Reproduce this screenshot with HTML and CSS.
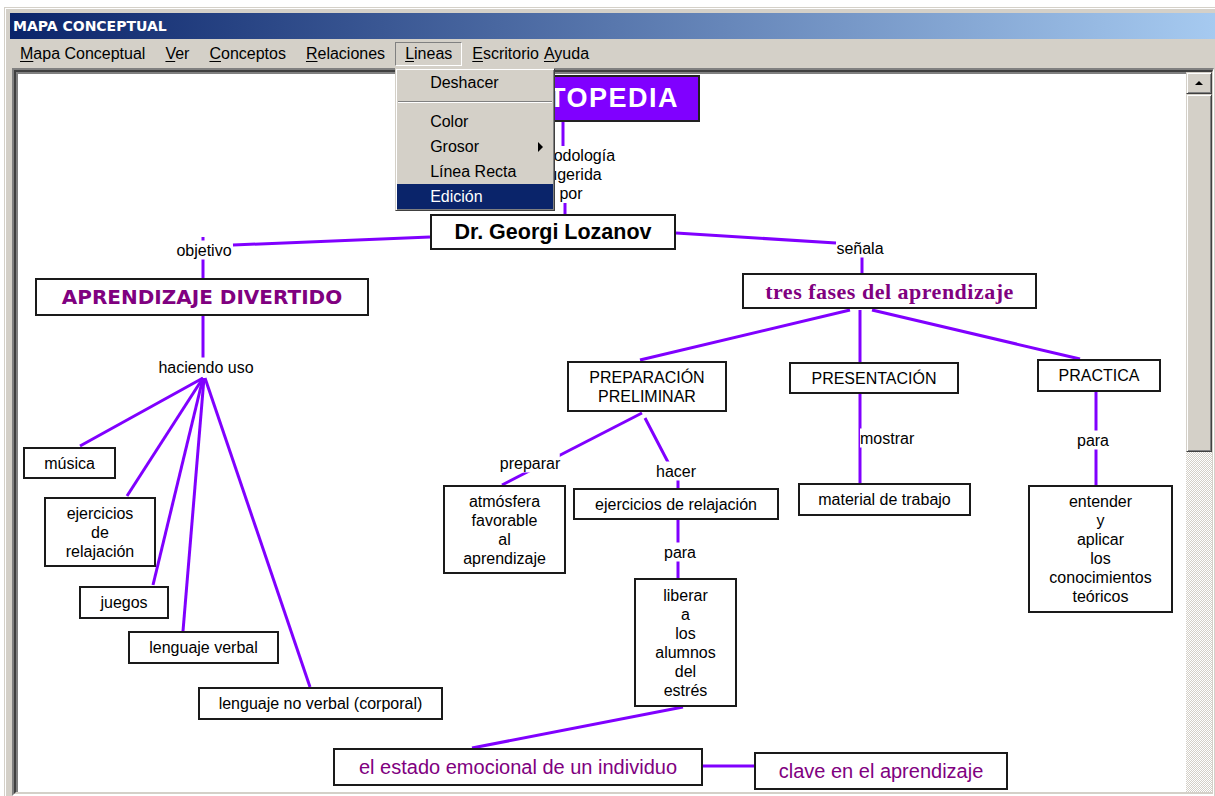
FILE: index.html
```html
<!DOCTYPE html>
<html lang="es">
<head>
<meta charset="utf-8">
<title>Mapa Conceptual</title>
<link rel="stylesheet" href="styles.css">
</head>
<body>
<div class="window">
  <div class="titlebar">MAPA CONCEPTUAL</div>
  <div class="menubar">
    <div class="menu-item"><u>M</u>apa Conceptual</div>
    <div class="menu-item"><u>V</u>er</div>
    <div class="menu-item"><u>C</u>onceptos</div>
    <div class="menu-item"><u>R</u>elaciones</div>
    <div class="menu-item open"><u>L</u>ineas
      <div class="dropdown">
        <div class="dd-item">Deshacer</div>
        <div class="dd-sep"><div class="dd-sep-line"></div></div>
        <div class="dd-item">Color</div>
        <div class="dd-item">Grosor<span class="dd-arrow"></span></div>
        <div class="dd-item">Línea Recta</div>
        <div class="dd-item active">Edición</div>
      </div>
    </div>
    <div class="menu-item tight-r"><u>E</u>scritorio</div>
    <div class="menu-item tight-l"><u>A</u>yuda</div>
  </div>
  <div class="frame">
    <div class="frame-inner">
      <div class="canvas">
        <svg class="links" width="1168" height="730" viewBox="0 0 1168 730">
          <g stroke="#8000ff" stroke-width="3" fill="none">
            <line x1="545" y1="48" x2="545" y2="72"/>
            <line x1="547" y1="126" x2="547" y2="140"/>
            <line x1="412" y1="163" x2="215" y2="171"/>
            <line x1="185" y1="163" x2="185" y2="204"/>
            <line x1="185" y1="242" x2="185" y2="286"/>
            <line x1="185" y1="304" x2="62" y2="372"/>
            <line x1="185" y1="304" x2="109" y2="422"/>
            <line x1="185" y1="304" x2="135" y2="511"/>
            <line x1="186" y1="304" x2="165" y2="557"/>
            <line x1="187" y1="304" x2="292" y2="613"/>
            <line x1="658" y1="159" x2="818" y2="169"/>
            <line x1="844" y1="183" x2="844" y2="199"/>
            <line x1="832" y1="236" x2="622" y2="286"/>
            <line x1="842" y1="236" x2="842" y2="288"/>
            <line x1="854" y1="236" x2="1062" y2="285"/>
            <line x1="842" y1="320" x2="842" y2="409"/>
            <line x1="1078" y1="318" x2="1078" y2="411"/>
            <line x1="624" y1="339" x2="484" y2="411"/>
            <polyline points="627,344 652,392 660,406 660,414"/>
            <line x1="660" y1="446" x2="660" y2="504"/>
            <line x1="665" y1="633" x2="454" y2="674"/>
            <line x1="685" y1="692" x2="736" y2="692"/>
          </g>
        </svg>

        <div class="node n-sug">SUGESTOPEDIA</div>
        <div class="label l-met">Metodología<br>sugerida<br>por</div>
        <div class="node n-dr">Dr. Georgi Lozanov</div>
        <div class="label lc l-obj">objetivo</div>
        <div class="label lc l-senala">señala</div>
        <div class="node n-apr">APRENDIZAJE DIVERTIDO</div>
        <div class="label lc l-haciendo">haciendo uso</div>
        <div class="node n-musica">música</div>
        <div class="node n-ejer1">ejercicios<br>de<br>relajación</div>
        <div class="node n-juegos">juegos</div>
        <div class="node n-lverbal">lenguaje verbal</div>
        <div class="node n-lnoverbal">lenguaje no verbal (corporal)</div>
        <div class="node n-tres">tres fases del aprendizaje</div>
        <div class="node n-prep">PREPARACIÓN<br>PRELIMINAR</div>
        <div class="node n-pres">PRESENTACIÓN</div>
        <div class="node n-prac">PRACTICA</div>
        <div class="label l-mostrar">mostrar</div>
        <div class="node n-material">material de trabajo</div>
        <div class="label lc l-para1">para</div>
        <div class="node n-entender">entender<br>y<br>aplicar<br>los<br>conocimientos<br>teóricos</div>
        <div class="label lc l-preparar">preparar</div>
        <div class="node n-atmos">atmósfera<br>favorable<br>al<br>aprendizaje</div>
        <div class="label lc l-hacer">hacer</div>
        <div class="node n-ejer2">ejercicios de relajación</div>
        <div class="label lc l-para2">para</div>
        <div class="node n-liberar">liberar<br>a<br>los<br>alumnos<br>del<br>estrés</div>
        <div class="node n-estado">el estado emocional de un individuo</div>
        <div class="node n-clave">clave en el aprendizaje</div>
      </div>
      <div class="scrollbar">
        <div class="sb-btn"><span class="sb-up"></span></div>
        <div class="sb-thumb"></div>
        <div class="sb-track"></div>
      </div>
    </div>
  </div>
</div>
</body>
</html>
```

FILE: styles.css
```css
* { box-sizing: border-box; }
html, body { margin: 0; padding: 0; }
body {
  background: #fff;
  width: 1215px;
  height: 796px;
  overflow: hidden;
  font-family: "Liberation Sans", Arial, sans-serif;
  font-size: 16px;
  color: #000;
}

.window {
  margin: 7px 0 0 4px;
  width: 1211px;
  height: 789px;
  background: #d4d0c8;
  border-top: 1px solid #d4d0c8;
  border-left: 1px solid #d4d0c8;
  box-shadow: inset 1px 1px 0 #fff;
  padding: 5px 0 0 5px;
  display: flex;
  flex-direction: column;
}

.titlebar {
  height: 26px;
  flex: none;
  background: linear-gradient(to right, #0a246a, #a6caf0);
  color: #fff;
  font-family: "DejaVu Sans", sans-serif;
  font-weight: bold;
  font-size: 14px;
  display: flex;
  align-items: center;
  padding-left: 3px;
}

.menubar {
  height: 29px;
  flex: none;
  display: flex;
  align-items: flex-start;
  padding-top: 3px;
}
.menu-item {
  position: relative;
  height: 24px;
  line-height: 22px;
  padding: 0 9px;
  border: 1px solid transparent;
  white-space: nowrap;
}
.menu-item u { text-underline-offset: 2px; }
.menu-item.open { border-color: #808080 #fff #fff #808080; }
.menu-item.tight-r { padding-right: 0; }
.menu-item.tight-l { padding-left: 3px; }

.dropdown {
  position: absolute;
  top: 25px;
  left: -1px;
  width: 160px;
  height: 143px;
  background: #d4d0c8;
  border: 1px solid;
  border-color: #d4d0c8 #404040 #404040 #d4d0c8;
  box-shadow: inset 1px 1px 0 #fff, inset -1px -1px 0 #808080;
  padding: 1px;
  z-index: 10;
}
.dd-item {
  position: relative;
  height: 25px;
  line-height: 25px;
  padding-left: 33px;
  white-space: nowrap;
}
.dd-item.active { background: #0a246a; color: #fff; }
.dd-sep { height: 14px; padding: 6px 1px 0; }
.dd-sep-line { border-top: 1px solid #808080; border-bottom: 1px solid #fff; }
.dd-arrow {
  position: absolute;
  right: 10px;
  top: 8px;
  width: 0;
  height: 0;
  border-left: 5px solid #000;
  border-top: 5px solid transparent;
  border-bottom: 5px solid transparent;
}

.frame {
  flex: 1;
  margin: 0 1px 0 2px;
  border: 2px solid;
  border-right-width: 1px;
  border-color: #808080 #fff #fff #808080;
  display: flex;
  min-height: 0;
}
.frame-inner {
  flex: 1;
  display: flex;
  border: 2px solid;
  border-right-width: 1px;
  border-color: #404040 #d4d0c8 #d4d0c8 #404040;
  min-height: 0;
}
.canvas {
  flex: 1;
  position: relative;
  background: #fff;
  border-top: 2px solid #808080;
  border-left: 2px solid #808080;
  overflow: hidden;
}
.links { position: absolute; left: 0; top: 0; z-index: 0; }

.node {
  position: absolute;
  z-index: 1;
  background: #fff;
  border: 2px solid #1a1a1a;
  display: flex;
  flex-direction: column;
  align-items: center;
  justify-content: center;
  text-align: center;
  font-size: 16px;
  line-height: 19px;
  white-space: nowrap;
}
.label {
  position: absolute;
  z-index: 1;
  background: #fff;
  font-size: 16px;
  line-height: 19px;
  white-space: nowrap;
  text-align: center;
}
.lc { transform: translate(-50%, -50%); }

.n-sug {
  left: 423px; top: 1px; width: 259px; height: 47px;
  background: #8000ff; color: #fff; border-color: #222;
  align-items: flex-end;
  padding-right: 19px;
  font-weight: bold; font-size: 27px; letter-spacing: 1.5px;
}
.l-met { left: 553px; top: 72px; transform: translateX(-50%); }
.n-dr { left: 412px; top: 140px; width: 246px; height: 36px; font-weight: bold; font-size: 21.5px; }
.l-obj { left: 186px; top: 176px; }
.l-senala { left: 842px; top: 174px; }
.n-apr {
  left: 17px; top: 204px; width: 334px; height: 38px;
  color: #800080; font-family: "DejaVu Sans", sans-serif; font-weight: bold; font-size: 20px;
}
.l-haciendo { left: 188px; top: 293px; }
.n-musica { left: 5px; top: 373px; width: 93px; height: 32px; }
.n-ejer1 { left: 26px; top: 423px; width: 112px; height: 70px; }
.n-juegos { left: 61px; top: 512px; width: 90px; height: 33px; }
.n-lverbal { left: 110px; top: 557px; width: 151px; height: 33px; }
.n-lnoverbal { left: 180px; top: 613px; width: 245px; height: 33px; }
.n-tres {
  left: 724px; top: 199px; width: 295px; height: 36px;
  color: #800080; font-family: "Liberation Serif", serif; font-weight: bold; font-size: 22px; letter-spacing: 0.5px;
}
.n-prep { left: 549px; top: 287px; width: 160px; height: 51px; }
.n-pres { left: 771px; top: 288px; width: 170px; height: 32px; }
.n-prac { left: 1019px; top: 285px; width: 124px; height: 33px; }
.l-mostrar { left: 842px; top: 364px; transform: translateY(-50%); }
.n-material { left: 780px; top: 409px; width: 173px; height: 33px; }
.l-para1 { left: 1075px; top: 366px; }
.n-entender { left: 1010px; top: 411px; width: 145px; height: 128px; }
.l-preparar { left: 512px; top: 389px; }
.n-atmos { left: 425px; top: 411px; width: 123px; height: 89px; }
.l-hacer { left: 658px; top: 397px; }
.n-ejer2 { left: 555px; top: 414px; width: 206px; height: 32px; }
.l-para2 { left: 662px; top: 478px; }
.n-liberar { left: 616px; top: 504px; width: 103px; height: 129px; }
.n-estado { left: 315px; top: 674px; width: 370px; height: 38px; color: #800080; font-size: 20px; }
.n-clave { left: 736px; top: 678px; width: 254px; height: 38px; color: #800080; font-size: 20px; }

.scrollbar {
  width: 26px;
  flex: none;
  display: flex;
  flex-direction: column;
}
.sb-btn, .sb-thumb {
  background: #d4d0c8;
  border: 1px solid;
  border-color: #d4d0c8 #404040 #404040 #d4d0c8;
  box-shadow: inset 1px 1px 0 #fff, inset -1px -1px 0 #808080;
}
.sb-btn {
  height: 22px;
  display: flex;
  align-items: center;
  justify-content: center;
}
.sb-up {
  width: 0;
  height: 0;
  border-left: 4px solid transparent;
  border-right: 4px solid transparent;
  border-bottom: 4px solid #000;
}
.sb-thumb { height: 358px; }
.sb-track {
  flex: 1;
  background-color: #fff;
  background-image: conic-gradient(#d4d0c8 25%, #fff 0 50%, #d4d0c8 0 75%, #fff 0);
  background-size: 2px 2px;
}
```
